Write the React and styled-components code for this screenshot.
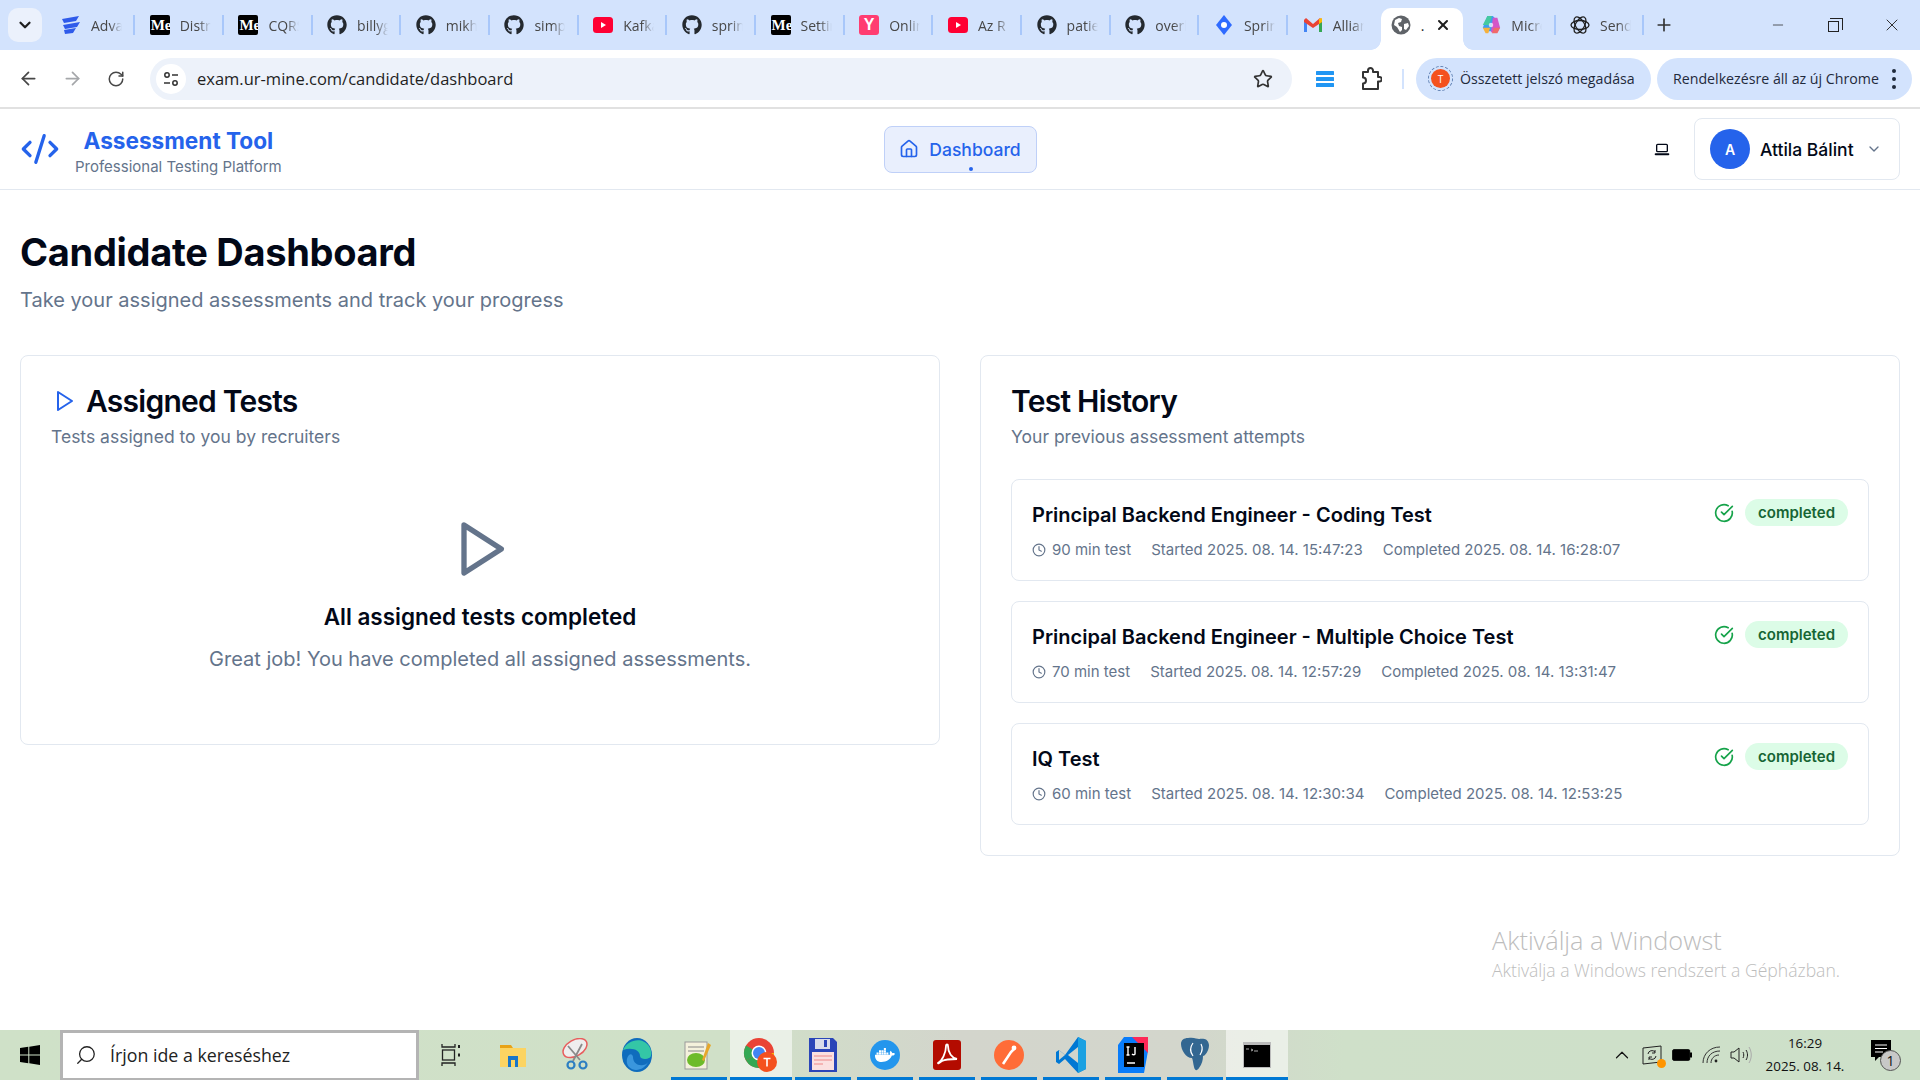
import React from 'react';
import styled, { createGlobalStyle } from 'styled-components';
import { FaGithub, FaDocker } from 'react-icons/fa';
import { ArrowLeft, ArrowRight, RotateCw, Star, Minus, X, Plus, ChevronDown, ChevronUp, House, Clock, Search } from 'lucide-react';

const GlobalStyle = createGlobalStyle`
  * { box-sizing: border-box; }
  html, body { margin: 0; padding: 0; height: 100%; overflow: hidden; background: #fff; }
  body { font-family: Inter, "Liberation Sans", sans-serif; color: #020817; }
`;

const Page = styled.div`
  height: 100vh;
  display: flex;
  flex-direction: column;
  position: relative;
`;

/* browser chrome */
const TabStrip = styled.div`
  height: 50px;
  flex: none;
  background: #d3e3fd;
  display: flex;
  align-items: flex-start;
  padding-left: 8px;
`;

const TabSearch = styled.div`
  width: 34px;
  height: 34px;
  margin-top: 8px;
  margin-right: 4.5px;
  border-radius: 10px;
  background: #ebf1fc;
  display: flex;
  align-items: center;
  justify-content: center;
  color: #1f1f1f;
`;

const Tab = styled.div`
  flex: 0 0 88.7px;
  height: 50px;
  display: flex;
  align-items: center;
  padding-left: 14.5px;
`;

const TabIcon = styled.div`
  width: 20px;
  height: 20px;
  flex: none;
  display: flex;
  align-items: center;
  justify-content: center;
`;

const TabTitle = styled.span`
  width: 31px;
  margin-left: 10px;
  overflow: hidden;
  white-space: nowrap;
  font: 14px "Open Sans", sans-serif;
  color: #474747;
  -webkit-mask-image: linear-gradient(90deg, #000 60%, transparent);
  mask-image: linear-gradient(90deg, #000 60%, transparent);
`;

const TabSep = styled.i`
  width: 2px;
  height: 20px;
  margin-left: auto;
  background: #a8c7fa;
`;

const ActiveTab = styled.div`
  flex: 0 0 82px;
  height: 42px;
  margin: 8px 4px 0;
  background: #fff;
  border-radius: 10px 10px 0 0;
  display: flex;
  align-items: center;
  padding: 0 12px 8px 10px;
  position: relative;
  color: #1f1f1f;
  &::before, &::after {
    content: '';
    position: absolute;
    bottom: 0;
    width: 10px;
    height: 10px;
  }
  &::before { left: -10px; background: radial-gradient(circle at 0 0, #d3e3fd 9.5px, #fff 10px); }
  &::after { right: -10px; background: radial-gradient(circle at 100% 0, #d3e3fd 9.5px, #fff 10px); }
`;

const ActiveDot = styled.span`
  margin-left: 10px;
  font: 14px "Open Sans", sans-serif;
  flex: 1;
`;

const NewTab = styled.div`
  margin: 9px 0 0 4px;
  width: 32px;
  height: 32px;
  display: flex;
  align-items: center;
  justify-content: center;
  color: #333;
`;

const WindowControls = styled.div`
  margin-left: auto;
  display: flex;
`;

const WindowButton = styled.div`
  width: 57px;
  height: 50px;
  display: flex;
  align-items: center;
  justify-content: center;
  color: #333;
`;

const RestoreGlyph = styled.div`
  width: 11px;
  height: 11px;
  border: 1.3px solid #222;
  position: relative;
  margin: 3px 3px 0 0;
  &::after {
    content: '';
    position: absolute;
    left: 1px;
    top: -4px;
    width: 12px;
    height: 11px;
    border-top: 1.3px solid #222;
    border-right: 1.3px solid #222;
  }
`;

const Toolbar = styled.div`
  height: 59px;
  flex: none;
  background: #fff;
  border-bottom: 2px solid #e1e1e1;
  border-radius: 10px 10px 0 0;
  display: flex;
  align-items: center;
  padding: 0 8px 0 6px;
`;

const NavButton = styled.div`
  width: 44px;
  height: 42px;
  flex: none;
  display: flex;
  align-items: center;
  justify-content: center;
  color: ${({ $off }) => ($off ? '#a5a7aa' : '#474747')};
`;

const Omnibox = styled.div`
  width: 1142px;
  height: 42px;
  flex: none;
  margin: 0 10px 0 12px;
  border-radius: 21px;
  background: #edf2fa;
  display: flex;
  align-items: center;
  padding: 0 19px 0 6px;
`;

const SiteChip = styled.div`
  width: 30px;
  height: 30px;
  border-radius: 50%;
  background: #fff;
  display: flex;
  align-items: center;
  justify-content: center;
`;

const UrlText = styled.span`
  margin-left: 11px;
  font: 16.5px "Open Sans", sans-serif;
  color: #1f1f1f;
  flex: 1;
`;

const ToolIcon = styled.div`
  width: 46px;
  height: 42px;
  flex: none;
  display: flex;
  align-items: center;
  justify-content: center;
  color: #333;
`;

const ToolSep = styled.i`
  width: 2px;
  height: 20px;
  background: #d3e3fd;
  margin: 0 12px 0 8px;
  flex: none;
`;

const Pill = styled.div`
  height: 42px;
  flex: none;
  width: ${({ $w }) => $w}px;
  margin-right: 6px;
  border-radius: 21px;
  background: #d3e3fd;
  display: flex;
  align-items: center;
  padding: 0 6px 0 ${({ $pl }) => $pl}px;
  gap: 7px;
  font: 14.2px "Open Sans", sans-serif;
  color: #1f2a3c;
  white-space: nowrap;
`;

const ProfileRing = styled.div`
  width: 25px;
  height: 25px;
  border-radius: 50%;
  border: 1.5px dashed #5b7db0;
  display: flex;
  align-items: center;
  justify-content: center;
  flex: none;
`;

const ProfileDot = styled.div`
  width: 19px;
  height: 19px;
  border-radius: 50%;
  background: #f4511e;
  color: #fff;
  font: 10px "Open Sans", sans-serif;
  display: flex;
  align-items: center;
  justify-content: center;
`;

const KebabDots = styled.div`
  margin-left: auto;
  margin-right: 10px;
  width: 4px;
  display: flex;
  flex-direction: column;
  gap: 4px;
  i { width: 4px; height: 4px; border-radius: 50%; background: #1f2a3c; }
`;

/* app header */
const Header = styled.header`
  height: 81px;
  flex: none;
  background: #fff;
  border-bottom: 1px solid #e2e8f0;
  display: grid;
  grid-template-columns: 1fr auto 1fr;
  align-items: center;
  padding: 0 20px;
`;

const Brand = styled.div`
  display: flex;
  align-items: center;
  gap: 15px;
`;

const BrandText = styled.div`
  text-align: center;
  padding-top: 4px;
`;

const BrandName = styled.div`
  font-size: 22.6px;
  line-height: 30px;
  font-weight: 700;
  color: #2563eb;
`;

const BrandTag = styled.div`
  font-size: 15px;
  line-height: 20px;
  margin-top: 1px;
  color: #64748b;
`;

const NavItem = styled.div`
  width: 153px;
  height: 47px;
  border: 1px solid #bfd0f8;
  border-radius: 8px;
  background: #e9effd;
  color: #2563eb;
  font-size: 17.5px;
  font-weight: 500;
  display: flex;
  align-items: center;
  justify-content: center;
  gap: 10px;
  position: relative;
  &::after {
    content: '';
    position: absolute;
    left: 84px;
    bottom: 1px;
    width: 4px;
    height: 4px;
    border-radius: 50%;
    background: #2563eb;
  }
`;

const HeaderRight = styled.div`
  display: flex;
  align-items: center;
  justify-content: flex-end;
`;

const LaptopIcon = styled.div`
  color: #020817;
  display: flex;
  margin-right: 24px;
`;

const UserButton = styled.div`
  width: 206px;
  height: 62px;
  border: 1px solid #e2e8f0;
  border-radius: 8px;
  display: flex;
  align-items: center;
  padding-left: 15px;
  gap: 10px;
`;

const Avatar = styled.div`
  width: 40px;
  height: 40px;
  border-radius: 50%;
  background: #2563eb;
  color: #fff;
  font-size: 14px;
  font-weight: 600;
  display: flex;
  align-items: center;
  justify-content: center;
`;

const UserName = styled.span`
  font-size: 17.5px;
  font-weight: 500;
  color: #020817;
  flex: 1;
  white-space: nowrap;
`;

const UserChevron = styled.div`
  display: flex;
  margin-right: 17px;
  color: #64748b;
`;

/* main content */
const Main = styled.main`
  flex: 1;
  padding: 40px 20px 0;
  background: #fff;
  min-height: 0;
`;

const PageTitle = styled.h1`
  margin: 0;
  font-size: 38px;
  line-height: 44px;
  font-weight: 700;
  letter-spacing: -0.3px;
`;

const PageSub = styled.p`
  margin: 12px 0 0;
  font-size: 20px;
  line-height: 28px;
  color: #64748b;
`;

const Columns = styled.div`
  margin-top: 41px;
  display: grid;
  grid-template-columns: 1fr 1fr;
  gap: 40px;
  align-items: start;
`;

const Card = styled.section`
  border: 1px solid #e2e8f0;
  border-radius: 8px;
  background: #fff;
  padding: 31px 30px 30px;
`;

const CardTitleRow = styled.div`
  display: flex;
  align-items: center;
  gap: 10px;
  height: 28px;
`;

const SmallPlay = styled.div`
  display: flex;
  margin-left: 1px;
  color: #2563eb;
`;

const CardTitle = styled.h2`
  margin: 0;
  font-size: 30px;
  line-height: 36px;
  font-weight: 600;
  letter-spacing: -0.75px;
`;

const CardSub = styled.p`
  margin: 10px 0 0;
  font-size: 17.5px;
  line-height: 24px;
  color: #64748b;
`;

const EmptyState = styled.div`
  display: flex;
  flex-direction: column;
  align-items: center;
  padding: 68px 0 39px;
  color: #64748b;
`;

const EmptyTitle = styled.h3`
  margin: 20px 0 0;
  font-size: 22.5px;
  line-height: 32px;
  font-weight: 600;
  color: #020817;
`;

const EmptyText = styled.p`
  margin: 10px 0 0;
  font-size: 20px;
  line-height: 32px;
  color: #64748b;
`;

const HistoryList = styled.div`
  margin-top: 30px;
  display: flex;
  flex-direction: column;
  gap: 20px;
`;

const HistoryItem = styled.div`
  height: 102px;
  border: 1px solid #e2e8f0;
  border-radius: 8px;
  padding: 21px 20px 0;
  display: flex;
  justify-content: space-between;
  align-items: flex-start;
`;

const ItemTitle = styled.div`
  font-size: 20px;
  line-height: 28px;
  font-weight: 600;
  color: #020817;
`;

const ItemMeta = styled.div`
  margin-top: 10px;
  display: flex;
  gap: 20px;
  font-size: 15px;
  line-height: 22px;
  color: #64748b;
`;

const Duration = styled.span`
  display: flex;
  align-items: center;
  gap: 6px;
`;

const ItemStatus = styled.div`
  display: flex;
  align-items: center;
  gap: 11px;
  margin-top: -2px;
`;

const Badge = styled.span`
  height: 27px;
  padding: 0 13px;
  border-radius: 14px;
  background: #dcfce7;
  color: #166534;
  font-size: 15px;
  font-weight: 600;
  display: flex;
  align-items: center;
`;

/* overlaid by Windows itself */
const Watermark = styled.div`
  position: absolute;
  left: 1492px;
  top: 923px;
  font-family: "Open Sans", sans-serif;
  font-weight: 300;
  color: #bdbdbd;
  pointer-events: none;
`;

const WatermarkBig = styled.div`
  font-size: 25.3px;
  line-height: 34px;
`;

const WatermarkSmall = styled.div`
  font-size: 17.6px;
  line-height: 26px;
`;

/* windows taskbar */
const Taskbar = styled.footer`
  height: 50px;
  flex: none;
  display: flex;
  align-items: stretch;
  background: linear-gradient(90deg, #cfe1c8 0%, #d0e0c8 38%, #d3d5cc 50%, #d3d6cc 62%, #cfe0c9 70%, #cde0c9 100%);
`;

const StartButton = styled.div`
  width: 60px;
  display: flex;
  align-items: center;
  justify-content: center;
`;

const SearchBox = styled.div`
  width: 359px;
  background: #fff;
  border: 3px solid #b4b4b4;
  border-bottom-width: 2px;
  display: flex;
  align-items: center;
  padding: 0 0 2px 12px;
  gap: 13px;
  font: 17.8px "Open Sans", sans-serif;
  color: #222;
`;

const MirrorSearch = styled(Search)`
  transform: scaleX(-1);
`;

const TaskIcons = styled.div`
  display: flex;
  margin-left: 1px;
`;

const TaskSlot = styled.div`
  width: 62px;
  display: flex;
  align-items: center;
  justify-content: center;
  padding-bottom: 1px;
  position: relative;
  background: ${({ $active }) => ($active ? 'rgba(255,255,255,0.55)' : 'transparent')};
  &::after {
    content: '';
    display: ${({ $open }) => ($open ? 'block' : 'none')};
    position: absolute;
    left: ${({ $active }) => ($active ? 0 : 3)}px;
    right: ${({ $active }) => ($active ? 0 : 3)}px;
    bottom: 0;
    height: 3px;
    background: #0078d4;
  }
`;

const Tray = styled.div`
  margin-left: auto;
  display: flex;
  align-items: center;
  color: #111;
`;

const TrayIcon = styled.div`
  width: 30px;
  display: flex;
  align-items: center;
  justify-content: center;
  position: relative;
`;

const OrangeDot = styled.i`
  position: absolute;
  right: 1px;
  bottom: -3px;
  width: 9px;
  height: 9px;
  border-radius: 50%;
  background: #ff9500;
`;

const Clockface = styled.div`
  width: 92px;
  margin-left: 2px;
  text-align: center;
  font: 13.4px/23px "Open Sans", sans-serif;
  color: #111;
`;

const Notification = styled.div`
  width: 35px;
  margin: 0 14px 0 20px;
  height: 30px;
  position: relative;
`;

const NotificationCount = styled.span`
  position: absolute;
  left: 9px;
  top: 10px;
  width: 21px;
  height: 21px;
  border-radius: 50%;
  border: 1px solid #555;
  background: #c8c8c8;
  font: 14px/19px "Open Sans", sans-serif;
  color: #111;
  text-align: center;
`;

const MediumBox = styled.div`
  width: 20px;
  height: 20px;
  background: #000;
  color: #fff;
  border-radius: 2px;
  overflow: hidden;
  font: 700 15px/20px "Liberation Serif", serif;
  white-space: nowrap;
  padding-left: 1px;
`;

const PinkBox = styled.div`
  width: 20px;
  height: 20px;
  border-radius: 3px;
  background: #ff3d71;
  color: #fff;
  font: 700 16px/20px "Liberation Sans", sans-serif;
  text-align: center;
`;

/* icons */
const PlayOutline = ({ size, stroke = 2 }) => (
  <svg width={size} height={size} viewBox="0 0 24 24" fill="none" stroke="currentColor" strokeWidth={stroke} strokeLinejoin="round" strokeLinecap="round">
    <polygon points="6 3 20 12 6 21 6 3" />
  </svg>
);

const CodeIcon = () => (
  <svg width="40" height="40" viewBox="0 0 24 24" fill="none" stroke="#2563eb" strokeWidth="2" strokeLinecap="round" strokeLinejoin="round">
    <path d="m18 16 4-4-4-4" />
    <path d="m6 8-4 4 4 4" />
    <path d="m14.5 4-5 16" />
  </svg>
);

const CheckCircle = () => (
  <svg width="20" height="20" viewBox="0 0 24 24" fill="none" stroke="#16a34a" strokeWidth="2" strokeLinecap="round" strokeLinejoin="round">
    <path d="M21.8 10A10 10 0 1 1 17 3.3" />
    <path d="m9 11 3 3L22 4" />
  </svg>
);

const Laptop = () => (
  <svg width="16" height="16" viewBox="0 0 24 24" fill="none" stroke="currentColor" strokeWidth="2" strokeLinecap="round" strokeLinejoin="round">
    <rect x="4" y="5" width="16" height="11" rx="1.5" />
    <path d="M2.5 20h19" strokeWidth="3" />
  </svg>
);

const Tune = () => (
  <svg width="18" height="18" viewBox="0 0 18 18" fill="none" stroke="#333" strokeWidth="1.5">
    <circle cx="5" cy="5" r="2.2" />
    <path d="M10 5h6M2 13h6" />
    <circle cx="13" cy="13" r="2.2" />
  </svg>
);

const ExtensionIcon = () => (
  <svg width="22" height="24" viewBox="0 0 22 24" fill="none" stroke="#333" strokeWidth="2" strokeLinejoin="round">
    <path d="M3 5h5V3.5a2.5 2.5 0 0 1 5 0V5h5v5h1.5a2.2 2.2 0 0 1 0 4.4H18V22H3v-5.5a3 3 0 0 0 0-6z" />
  </svg>
);

const ServerStack = () => (
  <svg width="20" height="18" viewBox="0 0 20 18" fill="#2196f3">
    <rect x="1" y="1" width="18" height="4" rx="0.5" />
    <rect x="1" y="7" width="18" height="4" rx="0.5" />
    <rect x="1" y="13" width="18" height="4" rx="0.5" />
  </svg>
);

const Globe = ({ size = 20 }) => (
  <svg width={size} height={size} viewBox="0 0 20 20">
    <circle cx="10" cy="10" r="9.5" fill="#5f6368" />
    <path d="M4 5l4-2 3 1-1 3-3 1 1 3 3 1v3l-2 2-3-5-3-2zM13 9l4-1 1 3-3 4-2-1z" fill="#fff" />
  </svg>
);

const Wedge = () => (
  <svg width="20" height="20" viewBox="0 0 20 20" fill="#2f5bea">
    <path d="M1 4l17-3-3 5L3 8zM2 10l17-3-3 5-12 2zM3 15l12-2-3 5-8 1z" />
  </svg>
);

const YoutubeBox = () => (
  <svg width="20" height="20" viewBox="0 0 20 20">
    <rect y="2" width="20" height="16" rx="3.5" fill="#ff0033" />
    <path d="M8 7l5 3-5 3z" fill="#fff" />
  </svg>
);

const SpringDiamond = () => (
  <svg width="20" height="20" viewBox="0 0 20 20">
    <path d="M10 0l8 10-8 10-8-10z" fill="#2f6bff" />
    <circle cx="10" cy="10" r="3" fill="#fff" />
  </svg>
);

const GmailIcon = () => (
  <svg width="20" height="20" viewBox="0 0 20 20" fill="none">
    <path d="M1 17V5l3-1v13z" fill="#4285f4" />
    <path d="M19 17V5l-3-1v13z" fill="#34a853" />
    <path d="M1 5l2-2 7 6 7-6 2 2v2l-9 6-9-6z" fill="#ea4335" />
    <path d="M16 4l3-1v4l-3 2z" fill="#fbbc04" />
  </svg>
);

const CopilotIcon = () => (
  <svg width="24" height="24" viewBox="0 0 22 22">
    <path d="M7 1h6l3 3-4 14H6L2 14z" fill="#3d9df0" />
    <path d="M7 1h5l-3 10H2z" fill="#45c9a0" />
    <path d="M13 3h5l3 11-3 5h-7z" fill="#d356c8" />
    <path d="M2 14h8l-2 6H5z" fill="#f5b13d" />
    <path d="M14 14h7l-3 6h-6z" fill="#f06a6a" />
    <circle cx="11" cy="11" r="2.5" fill="#fff" opacity="0.7" />
  </svg>
);

const OpenAiKnot = () => (
  <svg width="20" height="20" viewBox="0 0 20 20" fill="none" stroke="#1f1f1f" strokeWidth="1.3">
    <ellipse cx="10" cy="10" rx="9" ry="4.5" />
    <ellipse cx="10" cy="10" rx="9" ry="4.5" transform="rotate(60 10 10)" />
    <ellipse cx="10" cy="10" rx="9" ry="4.5" transform="rotate(120 10 10)" />
  </svg>
);

const WindowsLogo = () => (
  <svg width="20" height="20" viewBox="0 0 20 20" fill="#000">
    <path d="M0 3l8.3-1.2v7.7H0zM9.3 1.7L20 0v9.5H9.3zM0 10.5h8.3v7.7L0 17zM9.3 10.5H20V20L9.3 18.3z" />
  </svg>
);

const TaskView = () => (
  <svg width="20" height="24" viewBox="0 0 20 24" fill="none" stroke="#222" strokeWidth="1.3">
    <path d="M1 1v3h13V1M1 23v-3h13v3" />
    <rect x="1.5" y="7" width="12" height="10" />
    <path d="M18 2v3M18 10.5v3" strokeWidth="2" />
  </svg>
);

const Explorer = () => (
  <svg width="28" height="28" viewBox="0 0 28 28">
    <path d="M1 4h11l2 3H1z" fill="#e8a317" />
    <path d="M1 7h26v19H1z" fill="#fcd462" />
    <path d="M9 15h10v11h-3v-7h-4v7H9z" fill="#1976c9" />
  </svg>
);

const Snip = () => (
  <svg width="30" height="34" viewBox="0 0 30 34" fill="none">
    <ellipse cx="15" cy="10" rx="13" ry="8" transform="rotate(-30 15 10)" stroke="#e85d5d" strokeWidth="1.5" fill="#eee" />
    <path d="M8 8l12 14M22 6L13 23" stroke="#8a8a8a" strokeWidth="1.8" />
    <circle cx="11" cy="27" r="3.5" stroke="#2d7fc2" strokeWidth="2.2" />
    <circle cx="23" cy="27" r="3.5" stroke="#2d7fc2" strokeWidth="2.2" />
  </svg>
);

const Edge = () => (
  <svg width="30" height="34" viewBox="0 0 30 34">
    <ellipse cx="15" cy="17" rx="15" ry="17" fill="#0f6cbd" />
    <path d="M1 12C5 2 20-2 27 8c3 5 3 11 0 12-3 2-9 1-9-2 0-6-8-9-17-6z" fill="#34c6a6" />
    <path d="M11 19c0 6 5 9 10 8 2 0 4-1 5-3-3 7-13 11-19 5-3-3-3-9 0-12 2-2 4 0 4 2z" fill="#3a96dd" />
  </svg>
);

const NotepadPP = () => (
  <svg width="32" height="32" viewBox="0 0 32 32">
    <rect x="2" y="3" width="22" height="27" fill="#f4f1dc" stroke="#999" />
    <path d="M5 8h16M5 12h16" stroke="#888" />
    <ellipse cx="13" cy="21" rx="9" ry="7" fill="#6dbb2a" />
    <path d="M25 4l3 2-7 16-2-1z" fill="#e6a72c" />
  </svg>
);

const ChromeBadge = () => (
  <svg width="36" height="36" viewBox="0 0 36 36">
    <circle cx="16" cy="16" r="15" fill="#ea4335" />
    <path d="M16 16L3 23.5A15 15 0 0 0 16 31z" fill="#34a853" />
    <path d="M3 23.5A15 15 0 0 1 3 8.5L16 16z" fill="#34a853" />
    <path d="M16 16h15A15 15 0 0 1 16 31z" fill="#fbbc04" />
    <circle cx="16" cy="16" r="7.5" fill="#fff" />
    <circle cx="16" cy="16" r="6" fill="#4285f4" />
    <circle cx="24" cy="25" r="10" fill="#f4511e" />
    <path d="M20.5 21.5h7M24 21.5v8" stroke="#fff" strokeWidth="1.6" />
  </svg>
);

const Floppy = () => (
  <svg width="28" height="34" viewBox="0 0 28 34">
    <path d="M0 0h24l4 4v30H0z" fill="#2a45b8" />
    <rect x="6" y="1" width="15" height="10" fill="#d8dcea" />
    <rect x="15" y="2" width="3" height="7" fill="#2a45b8" />
    <rect x="3" y="14" width="22" height="18" fill="#fbe0e0" />
    <path d="M5 18h18M5 22h18M5 26h9" stroke="#e88" />
  </svg>
);

const DockerRound = () => (
  <svg width="30" height="30" viewBox="0 0 30 30">
    <circle cx="15" cy="15" r="15" fill="#2496ed" />
    <g transform="translate(5 5)"><FaDocker size={20} color="#fff" /></g>
  </svg>
);

const Acrobat = () => (
  <svg width="28" height="30" viewBox="0 0 28 30">
    <rect width="28" height="30" rx="3" fill="#b30b00" />
    <path d="M5 23c4-2 8-10 8-17 0-2 2-2 2 0 0 7 4 12 9 13-5 0-11 0-15 2-3 2-4 3-4 2z" fill="none" stroke="#fff" strokeWidth="1.8" />
  </svg>
);

const Postman = () => (
  <svg width="30" height="30" viewBox="0 0 30 30">
    <circle cx="15" cy="15" r="15" fill="#ff6c37" />
    <path d="M9 24l8-12 3-3" stroke="#fff" strokeWidth="2.6" fill="none" />
    <circle cx="20" cy="8" r="2.4" fill="#fff" />
  </svg>
);

const VsCode = () => (
  <svg width="30" height="36" viewBox="0 0 30 36">
    <path d="M22 0l8 4v28l-8 4-13-14-6 5-3-2v-10l3-2 6 5z" fill="#0078d4" />
    <path d="M22 0l8 4v28l-8 4z" fill="#1ba1e2" />
    <path d="M22 10L12 18l10 8z" fill="#d0d5cc" />
    <path d="M3 13l6 5-6 5z" fill="#d0d5cc" />
  </svg>
);

const Intellij = () => (
  <svg width="30" height="36" viewBox="0 0 30 36">
    <path d="M6 0h24v14l-4 22H0V8z" fill="#087cfa" />
    <path d="M14 0h16v16z" fill="#fe2857" />
    <rect x="6" y="6" width="20" height="24" fill="#000" />
    <path d="M10 10v8M8.5 10h3M8.5 18h3M17 10v7c0 1-2 1-3 0M9 26h8" stroke="#fff" strokeWidth="1.4" fill="none" />
  </svg>
);

const Postgres = () => (
  <svg width="30" height="36" viewBox="0 0 30 36">
    <path d="M8 1c6-1 9 1 11 1s9-2 10 6c0 6-4 11-6 11 0 4-1 8-4 12-2 3-4 3-5-1s-1-7-2-9c-6 0-11-8-11-14 0-4 3-6 7-6z" fill="#336791" />
    <path d="M13 6c-3 4-3 9 0 13M21 7c2 4 1 8-1 11" stroke="#fff" strokeWidth="1.2" fill="none" />
  </svg>
);

const Terminal = () => (
  <svg width="28" height="26" viewBox="0 0 28 26">
    <rect width="28" height="26" fill="#bbb" />
    <rect x="1" y="3" width="26" height="22" fill="#000" />
    <path d="M3 7h3M8 7l2 1-2 1M11 9h4" stroke="#aaa" fill="none" />
  </svg>
);

const Wifi = () => (
  <svg width="20" height="20" viewBox="0 0 20 20" fill="none" stroke="#333" strokeWidth="1">
    <path d="M1 18C1 9 8 2 18 2M5 18C5 11 10 6 18 6M9 18c0-4 3-8 8-8" />
    <circle cx="14" cy="16" r="1.4" fill="#222" stroke="none" />
  </svg>
);

const Speaker = () => (
  <svg width="24" height="20" viewBox="0 0 24 20" fill="none" stroke="#222" strokeWidth="1">
    <path d="M1 7h3l5-4v14l-5-4H1z" />
    <path d="M13 7c1 2 1 4 0 6M16 5c2 3 2 7 0 10" />
    <path d="M19 2c3 5 3 11 0 16" stroke="#aaa" />
  </svg>
);

const Battery = () => (
  <svg width="20" height="12" viewBox="0 0 20 12">
    <rect x="0.7" y="0.7" width="17" height="10.6" fill="#000" stroke="#000" rx="1" />
    <rect x="18" y="3.5" width="2" height="5" fill="#000" />
  </svg>
);

const Sync = () => (
  <svg width="20" height="20" viewBox="0 0 20 20" fill="none" stroke="#222" strokeWidth="1">
    <path d="M1 3l18-2v16L1 19z" />
    <path d="M6 9a4 4 0 0 1 7-2M13 5v3h-3M14 11a4 4 0 0 1-7 2M7 15v-3h3" />
  </svg>
);

const Bubble = () => (
  <svg width="20" height="22" viewBox="0 0 20 22">
    <path d="M0 0h20v17H8l-4 4v-4H0z" fill="#000" />
    <path d="M4 5h12M4 8.5h12M4 12h8" stroke="#fff" />
  </svg>
);

const tabs = [
  { title: 'Advanced', icon: <Wedge /> },
  { title: 'Distributed', icon: <MediumBox>Me</MediumBox> },
  { title: 'CQRS', icon: <MediumBox>Me</MediumBox> },
  { title: 'billyg', icon: <FaGithub size={20} color="#24292f" /> },
  { title: 'mikhail', icon: <FaGithub size={20} color="#24292f" /> },
  { title: 'simple', icon: <FaGithub size={20} color="#24292f" /> },
  { title: 'Kafka', icon: <YoutubeBox /> },
  { title: 'spring', icon: <FaGithub size={20} color="#24292f" /> },
  { title: 'Settings', icon: <MediumBox>Me</MediumBox> },
  { title: 'Online', icon: <PinkBox>Y</PinkBox> },
  { title: 'Az R', icon: <YoutubeBox /> },
  { title: 'patience', icon: <FaGithub size={20} color="#24292f" /> },
  { title: 'overlay', icon: <FaGithub size={20} color="#24292f" /> },
  { title: 'Spring', icon: <SpringDiamond /> },
];

const lastTabs = [
  { title: 'Microsoft', icon: <CopilotIcon /> },
  { title: 'Send', icon: <OpenAiKnot /> },
];

const taskApps = [
  { icon: <TaskView /> },
  { icon: <Explorer /> },
  { icon: <Snip /> },
  { icon: <Edge /> },
  { icon: <NotepadPP />, open: true },
  { icon: <ChromeBadge />, open: true, active: true },
  { icon: <Floppy />, open: true },
  { icon: <DockerRound />, open: true },
  { icon: <Acrobat />, open: true },
  { icon: <Postman />, open: true },
  { icon: <VsCode />, open: true },
  { icon: <Intellij />, open: true },
  { icon: <Postgres />, open: true },
  { icon: <Terminal />, open: true, active: true },
];

const history = [
  { title: 'Principal Backend Engineer - Coding Test', minutes: 90, started: '2025. 08. 14. 15:47:23', completed: '2025. 08. 14. 16:28:07' },
  { title: 'Principal Backend Engineer - Multiple Choice Test', minutes: 70, started: '2025. 08. 14. 12:57:29', completed: '2025. 08. 14. 13:31:47' },
  { title: 'IQ Test', minutes: 60, started: '2025. 08. 14. 12:30:34', completed: '2025. 08. 14. 12:53:25' },
];

const App = () => (
  <Page>
    <GlobalStyle />
    <TabStrip>
      <TabSearch><ChevronDown size={18} strokeWidth={3} /></TabSearch>
      {tabs.map((tab) => (
        <Tab key={tab.title}>
          <TabIcon>{tab.icon}</TabIcon>
          <TabTitle>{tab.title}</TabTitle>
          <TabSep />
        </Tab>
      ))}
      <Tab>
        <TabIcon><GmailIcon /></TabIcon>
        <TabTitle>Alliance</TabTitle>
      </Tab>
      <ActiveTab>
        <Globe />
        <ActiveDot>.</ActiveDot>
        <X size={16} strokeWidth={3} />
      </ActiveTab>
      {lastTabs.map((tab) => (
        <Tab key={tab.title}>
          <TabIcon>{tab.icon}</TabIcon>
          <TabTitle>{tab.title}</TabTitle>
          <TabSep />
        </Tab>
      ))}
      <NewTab><Plus size={20} strokeWidth={2} /></NewTab>
      <WindowControls>
        <WindowButton><Minus size={16} strokeWidth={1.2} /></WindowButton>
        <WindowButton><RestoreGlyph /></WindowButton>
        <WindowButton><X size={20} strokeWidth={1.2} /></WindowButton>
      </WindowControls>
    </TabStrip>

    <Toolbar>
      <NavButton><ArrowLeft size={21} /></NavButton>
      <NavButton $off><ArrowRight size={21} /></NavButton>
      <NavButton><RotateCw size={18} /></NavButton>
      <Omnibox>
        <SiteChip><Tune /></SiteChip>
        <UrlText>exam.ur-mine.com/candidate/dashboard</UrlText>
        <Star size={20} color="#333" />
      </Omnibox>
      <ToolIcon><ServerStack /></ToolIcon>
      <ToolIcon><ExtensionIcon /></ToolIcon>
      <ToolSep />
      <Pill $w={235} $pl={12}>
        <ProfileRing><ProfileDot>T</ProfileDot></ProfileRing>
        Összetett jelszó megadása
      </Pill>
      <Pill $w={255} $pl={16}>
        Rendelkezésre áll az új Chrome
        <KebabDots><i /><i /><i /></KebabDots>
      </Pill>
    </Toolbar>

    <Header>
      <Brand>
        <CodeIcon />
        <BrandText>
          <BrandName>Assessment Tool</BrandName>
          <BrandTag>Professional Testing Platform</BrandTag>
        </BrandText>
      </Brand>
      <NavItem>
        <House size={20} />
        Dashboard
      </NavItem>
      <HeaderRight>
        <LaptopIcon><Laptop /></LaptopIcon>
        <UserButton>
          <Avatar>A</Avatar>
          <UserName>Attila Bálint</UserName>
          <UserChevron><ChevronDown size={16} /></UserChevron>
        </UserButton>
      </HeaderRight>
    </Header>

    <Main>
      <PageTitle>Candidate Dashboard</PageTitle>
      <PageSub>Take your assigned assessments and track your progress</PageSub>
      <Columns>
        <Card>
          <CardTitleRow>
            <SmallPlay><PlayOutline size={24} /></SmallPlay>
            <CardTitle>Assigned Tests</CardTitle>
          </CardTitleRow>
          <CardSub>Tests assigned to you by recruiters</CardSub>
          <EmptyState>
            <PlayOutline size={64} />
            <EmptyTitle>All assigned tests completed</EmptyTitle>
            <EmptyText>Great job! You have completed all assigned assessments.</EmptyText>
          </EmptyState>
        </Card>
        <Card>
          <CardTitleRow>
            <CardTitle>Test History</CardTitle>
          </CardTitleRow>
          <CardSub>Your previous assessment attempts</CardSub>
          <HistoryList>
            {history.map((item) => (
              <HistoryItem key={item.title}>
                <div>
                  <ItemTitle>{item.title}</ItemTitle>
                  <ItemMeta>
                    <Duration><Clock size={14} />{item.minutes} min test</Duration>
                    <span>Started {item.started}</span>
                    <span>Completed {item.completed}</span>
                  </ItemMeta>
                </div>
                <ItemStatus>
                  <CheckCircle />
                  <Badge>completed</Badge>
                </ItemStatus>
              </HistoryItem>
            ))}
          </HistoryList>
        </Card>
      </Columns>
    </Main>

    <Watermark>
      <WatermarkBig>Aktiválja a Windowst</WatermarkBig>
      <WatermarkSmall>Aktiválja a Windows rendszert a Gépházban.</WatermarkSmall>
    </Watermark>

    <Taskbar>
      <StartButton><WindowsLogo /></StartButton>
      <SearchBox>
        <MirrorSearch size={22} strokeWidth={1.4} />
        Írjon ide a kereséshez
      </SearchBox>
      <TaskIcons>
        {taskApps.map((app, index) => (
          <TaskSlot key={index} $open={app.open} $active={app.active}>{app.icon}</TaskSlot>
        ))}
      </TaskIcons>
      <Tray>
        <TrayIcon><ChevronUp size={22} strokeWidth={1.3} /></TrayIcon>
        <TrayIcon><Sync /><OrangeDot /></TrayIcon>
        <TrayIcon><Battery /></TrayIcon>
        <TrayIcon><Wifi /></TrayIcon>
        <TrayIcon><Speaker /></TrayIcon>
        <Clockface>16:29<br />2025. 08. 14.</Clockface>
        <Notification>
          <Bubble />
          <NotificationCount>1</NotificationCount>
        </Notification>
      </Tray>
    </Taskbar>
  </Page>
);

export default App;
